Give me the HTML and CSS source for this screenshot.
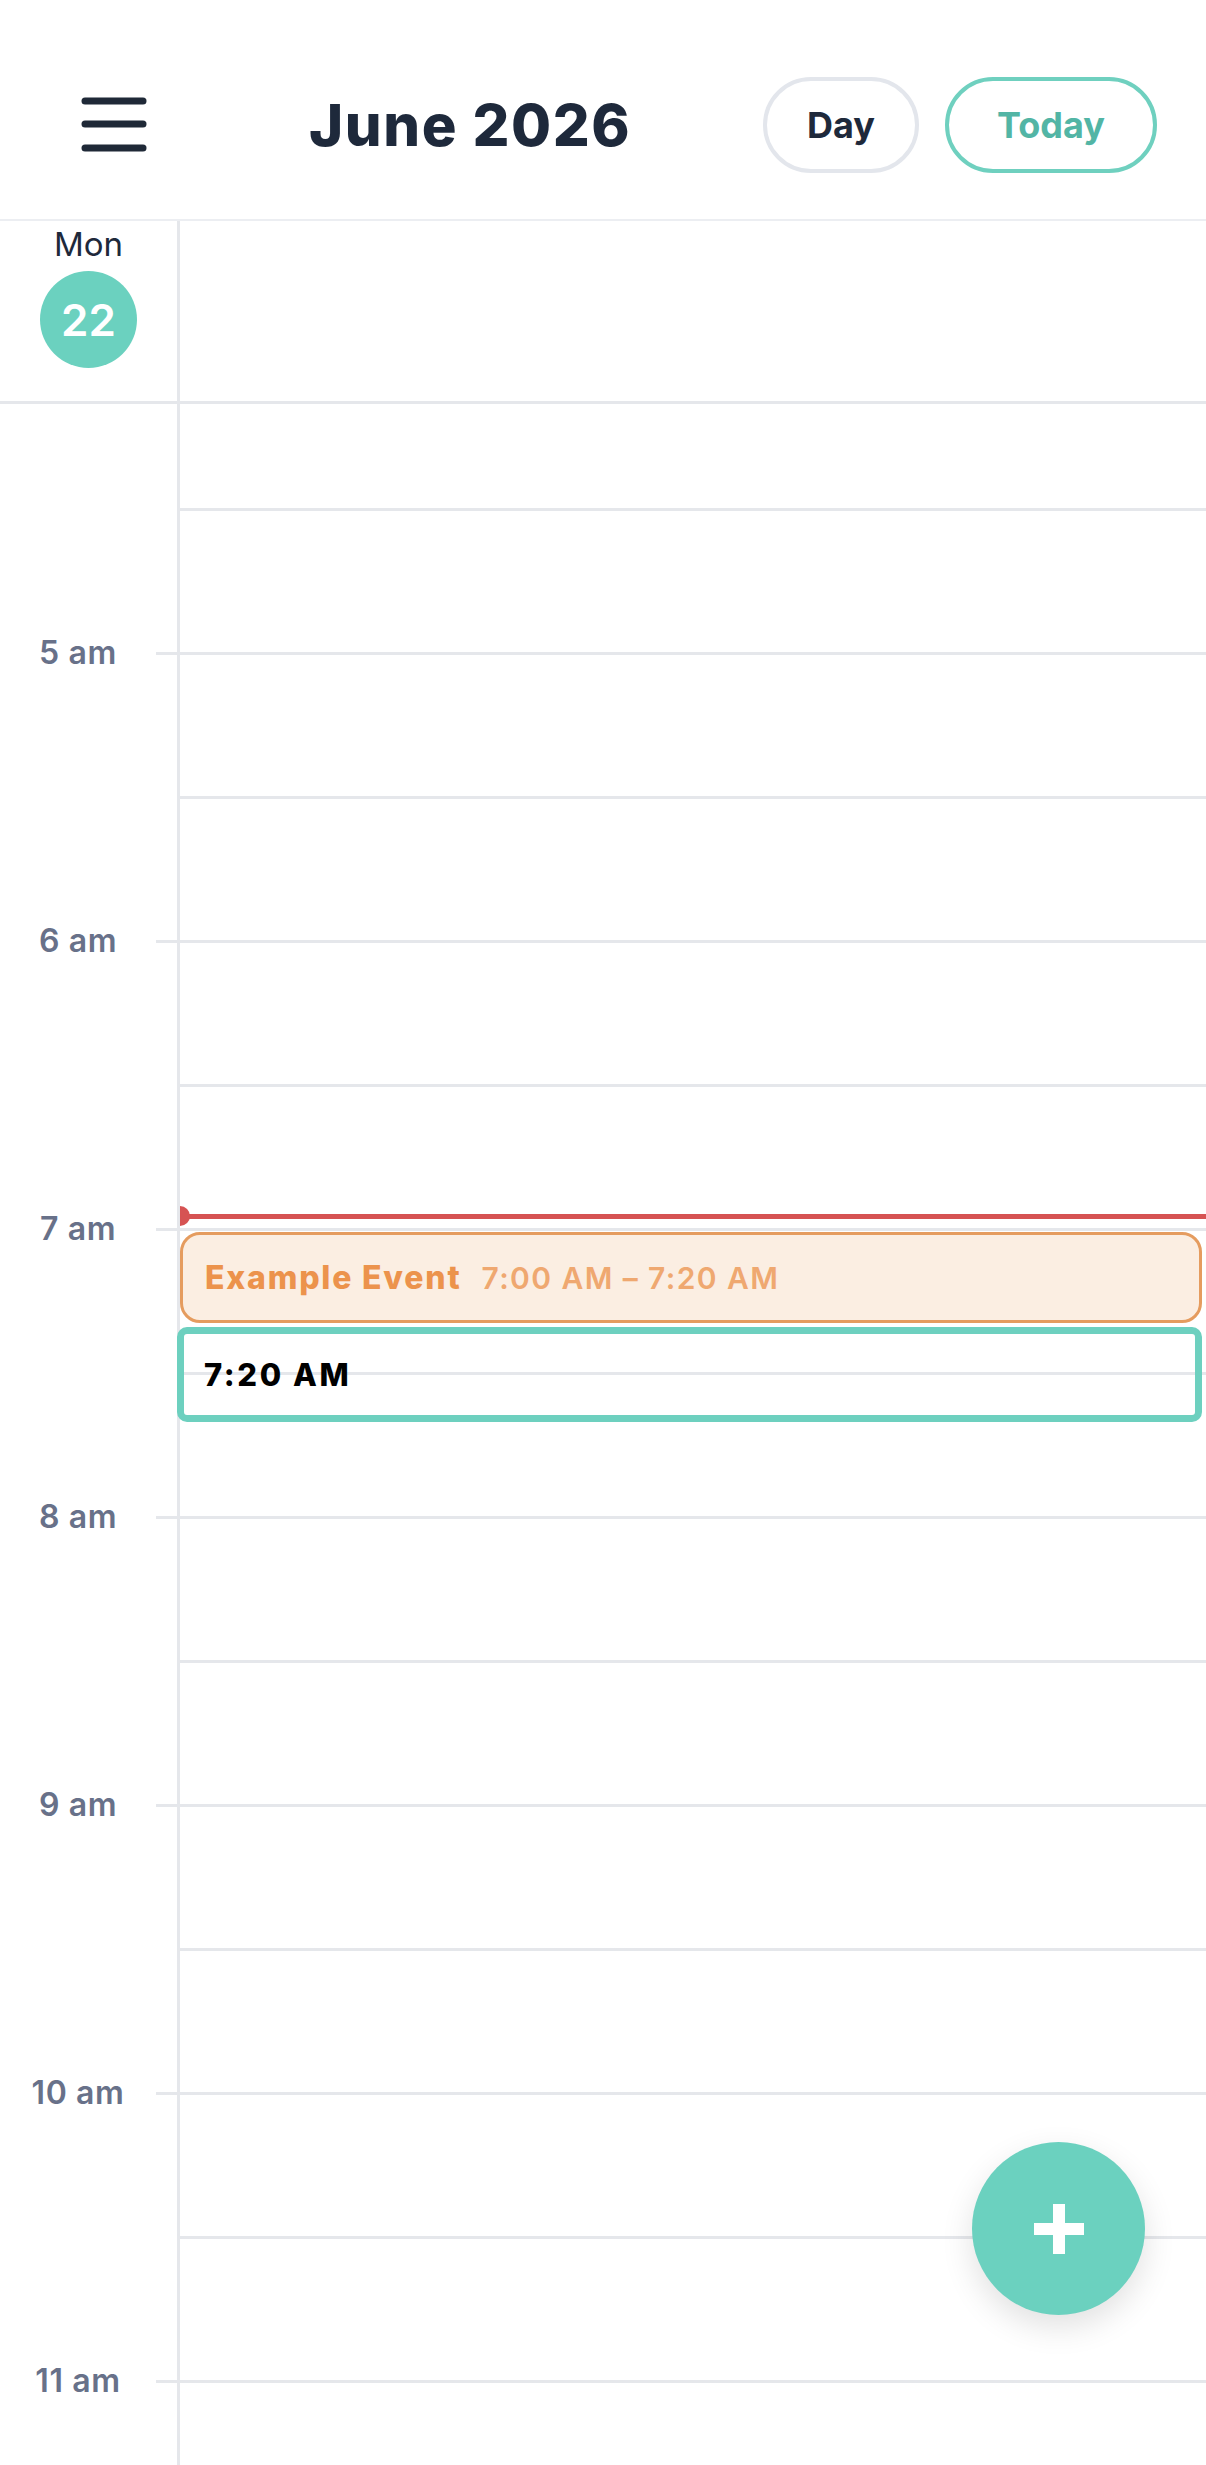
FILE: index.html
```html
<!DOCTYPE html>
<html lang="en">
<head>
    <meta charset="UTF-8">
    <meta name="viewport" content="width=device-width, initial-scale=1.0">
    <title>Calendar - Day View</title>
    <link rel="stylesheet" href="styles.css">
</head>
<body>
    <div class="calendar">
        <header class="top-bar">
            <button class="menu-button" aria-label="Menu">
                <svg class="menu-icon" viewBox="0 0 66 56" fill="none" stroke="currentColor" stroke-width="7" stroke-linecap="round">
                    <line x1="4" y1="4" x2="62" y2="4"></line>
                    <line x1="4" y1="27" x2="62" y2="27"></line>
                    <line x1="4" y1="51" x2="62" y2="51"></line>
                </svg>
            </button>
            <h1 class="month-title">June 2026</h1>
            <div class="top-actions">
                <button class="pill pill-day">Day</button>
                <button class="pill pill-today">Today</button>
            </div>
        </header>

        <div class="day-head">
            <div class="day-head-date">
                <span class="weekday">Mon</span>
                <span class="date-badge">22</span>
            </div>
            <div class="day-head-all"></div>
        </div>

        <div class="timeline-view">
            <div class="timeline">
                <!-- 4 am row is scrolled past the top; its label is out of view -->
                <div class="hour-row">
                    <div class="gutter"><span class="hour-label"></span><span class="tick"></span></div>
                    <div class="slot"><div class="half"></div><div class="half second"></div></div>
                </div>
                <div class="hour-row">
                    <div class="gutter"><span class="hour-label">5 am</span><span class="tick"></span></div>
                    <div class="slot"><div class="half"></div><div class="half second"></div></div>
                </div>
                <div class="hour-row">
                    <div class="gutter"><span class="hour-label">6 am</span><span class="tick"></span></div>
                    <div class="slot"><div class="half"></div><div class="half second"></div></div>
                </div>
                <div class="hour-row">
                    <div class="gutter"><span class="hour-label">7 am</span><span class="tick"></span></div>
                    <div class="slot"><div class="half"></div><div class="half second"></div></div>
                </div>
                <div class="hour-row">
                    <div class="gutter"><span class="hour-label">8 am</span><span class="tick"></span></div>
                    <div class="slot"><div class="half"></div><div class="half second"></div></div>
                </div>
                <div class="hour-row">
                    <div class="gutter"><span class="hour-label">9 am</span><span class="tick"></span></div>
                    <div class="slot"><div class="half"></div><div class="half second"></div></div>
                </div>
                <div class="hour-row">
                    <div class="gutter"><span class="hour-label">10 am</span><span class="tick"></span></div>
                    <div class="slot"><div class="half"></div><div class="half second"></div></div>
                </div>
                <div class="hour-row">
                    <div class="gutter"><span class="hour-label">11 am</span><span class="tick"></span></div>
                    <div class="slot"><div class="half"></div><div class="half second"></div></div>
                </div>

                <!-- events layer: 4.8px per minute, starting at 4:00 -->
                <div class="events">
                    <div class="now-line" style="top: 850px;"></div>
                    <div class="event event-orange" style="top: 868px; height: 91px;">
                        <span class="event-title">Example Event</span>
                        <span class="event-time">7:00 AM – 7:20 AM</span>
                    </div>
                    <div class="event-draft" style="top: 963px; height: 95px;">
                        <span class="draft-time">7:20 AM</span>
                    </div>
                </div>
            </div>
        </div>

        <button class="fab" aria-label="New event">
            <svg class="fab-icon" viewBox="0 0 50 50" fill="#fff">
                <rect x="19" y="0" width="12" height="50"></rect>
                <rect x="0" y="19" width="50" height="12"></rect>
            </svg>
        </button>
    </div>
</body>
</html>
```

FILE: styles.css
```css
* {
    margin: 0;
    padding: 0;
    box-sizing: border-box;
}

body {
    font-family: Inter, "Noto Sans", "Liberation Sans", sans-serif;
    background-color: #fff;
    color: #1e293b;
}

button {
    font-family: inherit;
    background: none;
    border: none;
}

.calendar {
    position: relative;
    width: 1206px;
    height: 2465px;
    overflow: hidden;
    display: flex;
    flex-direction: column;
}

/* top bar */
.top-bar {
    height: 221px;
    padding: 30px 49px 0 81px;
    display: flex;
    align-items: center;
    border-bottom: 2px solid #eceef2;
    flex-shrink: 0;
}

.menu-button {
    display: flex;
    color: #1f2937;
}

.menu-icon {
    width: 66px;
    height: 56px;
}

.month-title {
    margin-left: 162px;
    font-size: 58px;
    font-weight: 800;
    letter-spacing: 1.6px;
    color: #1e293b;
}

.top-actions {
    margin-left: auto;
    display: flex;
    gap: 26px;
}

.pill {
    height: 96px;
    border-radius: 9999px;
    border: 4px solid #e3e6ec;
    font-size: 36px;
    font-weight: 700;
    color: #1e293b;
}

.pill-day {
    width: 156px;
}

.pill-today {
    width: 212px;
    border-color: #6fd0bf;
    color: #52b5a5;
}

/* day header */
.day-head {
    height: 183px;
    display: flex;
    border-bottom: 3px solid #e5e7eb;
    flex-shrink: 0;
}

.day-head-date {
    width: 180px;
    border-right: 3px solid #e5e7eb;
    display: flex;
    flex-direction: column;
    align-items: center;
    padding-top: 3px;
}

.weekday {
    font-size: 33px;
    line-height: 40px;
    color: #1e293b;
}

.date-badge {
    margin-top: 7px;
    width: 97px;
    height: 97px;
    border-radius: 50%;
    background-color: #6bd1bf;
    color: #fff;
    font-size: 44px;
    font-weight: 600;
    display: flex;
    align-items: center;
    justify-content: center;
}

.day-head-all {
    flex: 1;
}

/* timeline */
.timeline-view {
    flex: 1;
    overflow: hidden;
}

.timeline {
    position: relative;
    margin-top: -40px;
}

.hour-row {
    display: flex;
    height: 288px;
}

.gutter {
    width: 177px;
    display: flex;
    align-items: flex-start;
}

.hour-label {
    width: 156px;
    text-align: center;
    font-size: 32px;
    font-weight: 600;
    line-height: 40px;
    margin-top: -19px;
    color: #687189;
    letter-spacing: 0.6px;
}

.tick {
    flex: 1;
    border-top: 3px solid #e5e7eb;
}

.slot {
    flex: 1;
    border-left: 3px solid #e5e7eb;
    border-top: 3px solid #e5e7eb;
    display: flex;
    flex-direction: column;
}

.half {
    height: 141px;
}

.half.second {
    height: 144px;
    border-top: 3px solid #e5e7eb;
}

.events {
    position: absolute;
    top: 0;
    left: 180px;
    right: 0;
    bottom: 0;
}

.now-line {
    position: absolute;
    left: 0;
    right: 0;
    height: 5px;
    background-color: #d65353;
}

.now-line::before {
    content: "";
    position: absolute;
    left: 0;
    top: -8px;
    width: 10px;
    height: 20px;
    border-radius: 0 10px 10px 0;
    background-color: #d65353;
}

.event {
    position: absolute;
    left: 0;
    right: 4px;
    border-radius: 20px;
    display: flex;
    align-items: center;
    gap: 20px;
    padding-left: 22px;
}

.event-orange {
    background-color: #fbeee2;
    border: 3px solid #e59c5f;
}

.event-title {
    font-size: 32px;
    font-weight: 800;
    letter-spacing: 1.8px;
    color: #ec934c;
}

.event-time {
    font-size: 30px;
    font-weight: 600;
    letter-spacing: 1.4px;
    color: #efa870;
}

.event-draft {
    position: absolute;
    left: -3px;
    right: 4px;
    border: 7px solid #6dd0bf;
    border-radius: 10px;
    display: flex;
    align-items: center;
    padding-left: 20px;
}

.draft-time {
    font-size: 31px;
    font-weight: 800;
    letter-spacing: 2.6px;
    color: #000;
}

/* floating add button */
.fab {
    position: absolute;
    right: 61px;
    bottom: 150px;
    width: 173px;
    height: 173px;
    border-radius: 50%;
    background-color: #6bd1bf;
    box-shadow: 0 12px 32px rgb(0 0 0 / 0.12);
    display: flex;
    align-items: center;
    justify-content: center;
}

.fab-icon {
    width: 50px;
    height: 50px;
}
```
